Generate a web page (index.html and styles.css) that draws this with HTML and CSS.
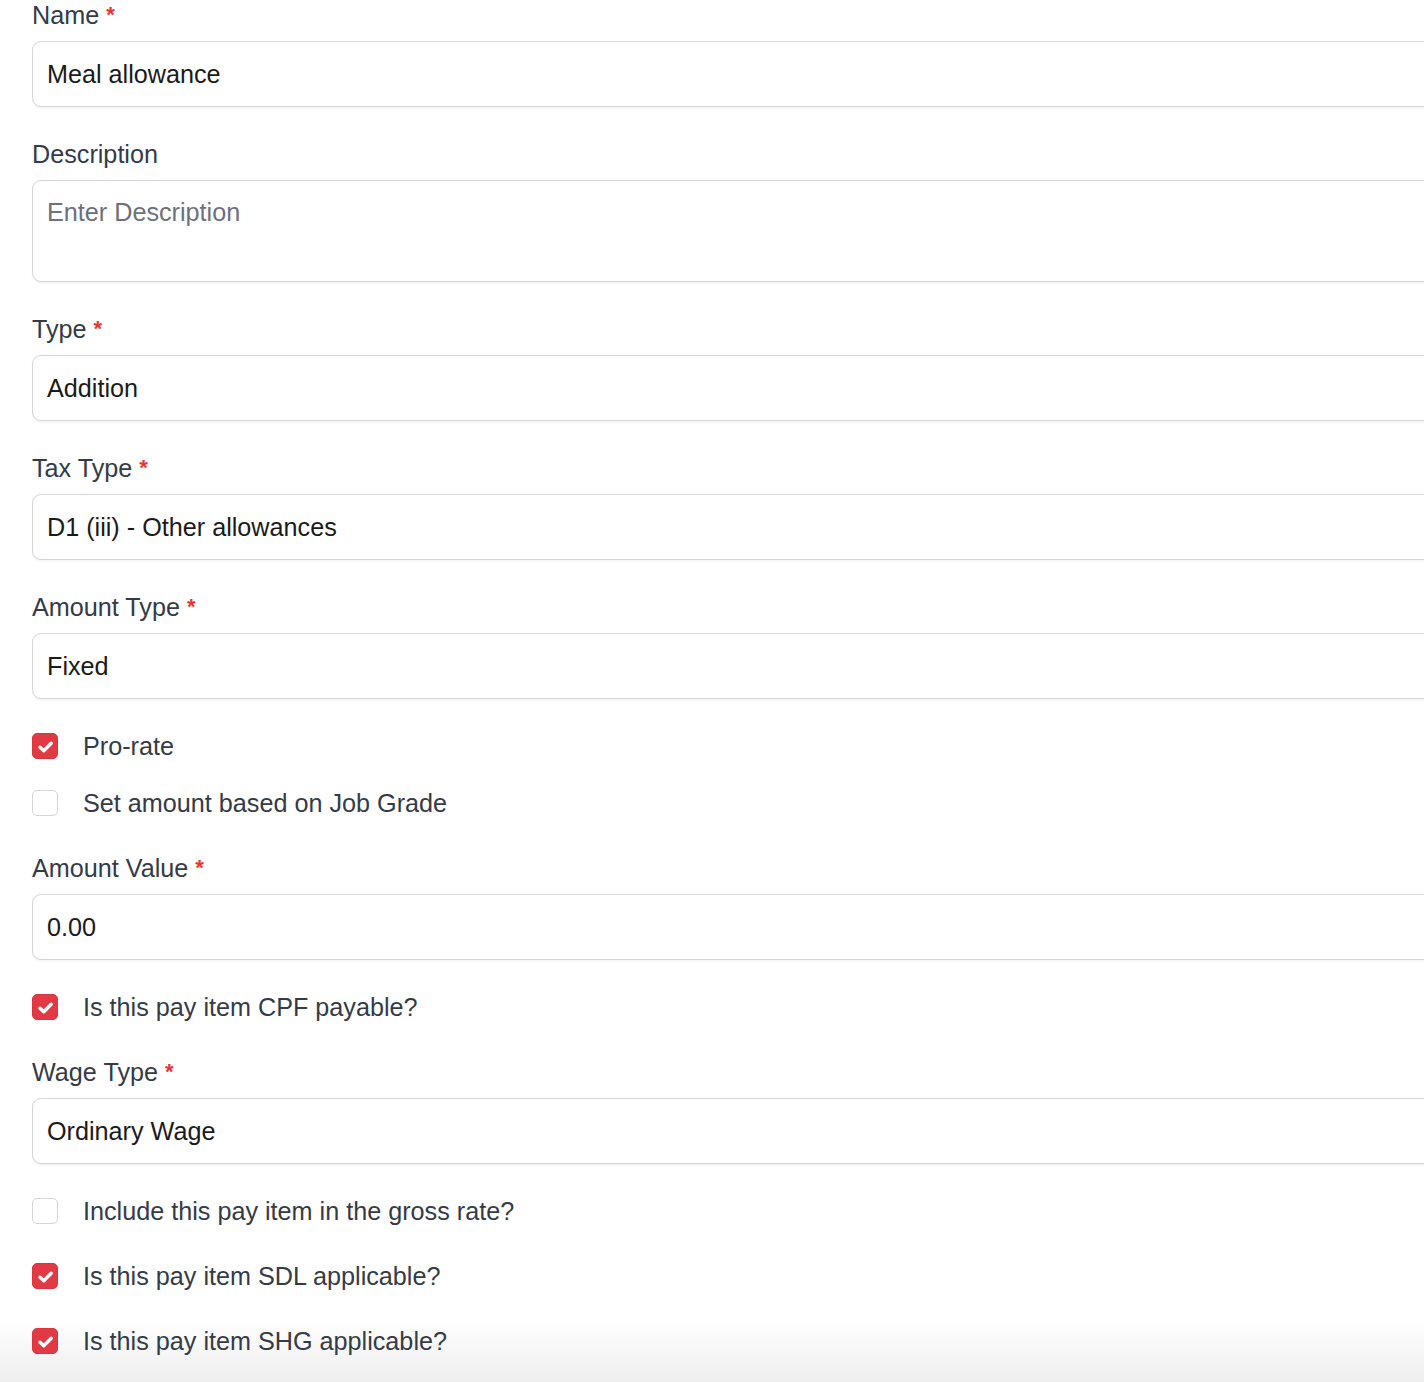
FILE: index.html
```html
<!DOCTYPE html>
<html lang="en">
<head>
<meta charset="utf-8">
<title>Pay item</title>
<link rel="stylesheet" href="styles.css">
</head>
<body>
<form class="form">
  <div class="field">
    <label class="label">Name <span class="req">*</span></label>
    <div class="input">Meal allowance</div>
  </div>
  <div class="field">
    <label class="label">Description</label>
    <div class="input textarea placeholder">Enter Description</div>
  </div>
  <div class="field">
    <label class="label">Type <span class="req">*</span></label>
    <div class="input">Addition</div>
  </div>
  <div class="field">
    <label class="label">Tax Type <span class="req">*</span></label>
    <div class="input">D1 (iii) - Other allowances</div>
  </div>
  <div class="field">
    <label class="label">Amount Type <span class="req">*</span></label>
    <div class="input">Fixed</div>
  </div>
  <div class="check tight">
    <span class="box checked"><svg viewBox="0 0 26 26" width="26" height="26"><path d="M8 14.2l3.8 3.6 7.4-7.6" fill="none" stroke="#fff" stroke-width="3.4" stroke-linecap="round" stroke-linejoin="round"/></svg></span>
    <span class="check-text">Pro-rate</span>
  </div>
  <div class="check">
    <span class="box"></span>
    <span class="check-text">Set amount based on Job Grade</span>
  </div>
  <div class="field">
    <label class="label">Amount Value <span class="req">*</span></label>
    <div class="input">0.00</div>
  </div>
  <div class="check">
    <span class="box checked"><svg viewBox="0 0 26 26" width="26" height="26"><path d="M8 14.2l3.8 3.6 7.4-7.6" fill="none" stroke="#fff" stroke-width="3.4" stroke-linecap="round" stroke-linejoin="round"/></svg></span>
    <span class="check-text">Is this pay item CPF payable?</span>
  </div>
  <div class="field">
    <label class="label">Wage Type <span class="req">*</span></label>
    <div class="input">Ordinary Wage</div>
  </div>
  <div class="check">
    <span class="box"></span>
    <span class="check-text">Include this pay item in the gross rate?</span>
  </div>
  <div class="check">
    <span class="box checked"><svg viewBox="0 0 26 26" width="26" height="26"><path d="M8 14.2l3.8 3.6 7.4-7.6" fill="none" stroke="#fff" stroke-width="3.4" stroke-linecap="round" stroke-linejoin="round"/></svg></span>
    <span class="check-text">Is this pay item SDL applicable?</span>
  </div>
  <div class="check">
    <span class="box checked"><svg viewBox="0 0 26 26" width="26" height="26"><path d="M8 14.2l3.8 3.6 7.4-7.6" fill="none" stroke="#fff" stroke-width="3.4" stroke-linecap="round" stroke-linejoin="round"/></svg></span>
    <span class="check-text">Is this pay item SHG applicable?</span>
  </div>
</form>
</body>
</html>
```
FILE: styles.css
```css
html {
  min-height: 100%;
  background: linear-gradient(to bottom, #ffffff calc(100% - 72px), #ebebeb 100%);
}
html, body {
  margin: 0;
  padding: 0;
  overflow: hidden;
}
body {
  font-family: "Liberation Sans", Arial, Helvetica, sans-serif;
  font-size: 25.2px;
  color: #1f2328;
  min-height: 1382px;
}
.form {
  width: 1440px;
  margin-left: 32px;
  padding-top: 1px;
  display: flex;
  flex-direction: column;
}
.field {
  display: flex;
  flex-direction: column;
  gap: 12px;
  margin-bottom: 33px;
}
.label {
  height: 28px;
  line-height: 28px;
  color: #343b47;
}
.req {
  color: #e8352f;
  font-size: 22px;
  font-weight: bold;
  vertical-align: 2px;
}
.input {
  box-sizing: border-box;
  height: 66px;
  border: 1px solid #d4d4d9;
  border-radius: 9px;
  padding: 0 14px;
  display: flex;
  align-items: center;
  color: #1a1a1a;
  background: #fff;
  box-shadow: 0 2px 2px rgba(0, 0, 0, 0.04);
}
.textarea {
  height: 102px;
  align-items: flex-start;
  padding-top: 17px;
}
.placeholder {
  color: #6b717c;
}
.check {
  height: 28px;
  display: flex;
  align-items: center;
  gap: 25px;
  margin-bottom: 37px;
  color: #343b47;
}
.check.tight {
  margin-bottom: 29px;
}
.box {
  box-sizing: border-box;
  width: 26px;
  height: 26px;
  border: 1px solid #d4d4d9;
  border-radius: 5px;
  background: #fff;
  display: flex;
  flex-shrink: 0;
}
.box.checked {
  background: #e23a45;
  border-color: #d8363f;
}
.box svg {
  display: block;
  margin: -1px;
}
```
